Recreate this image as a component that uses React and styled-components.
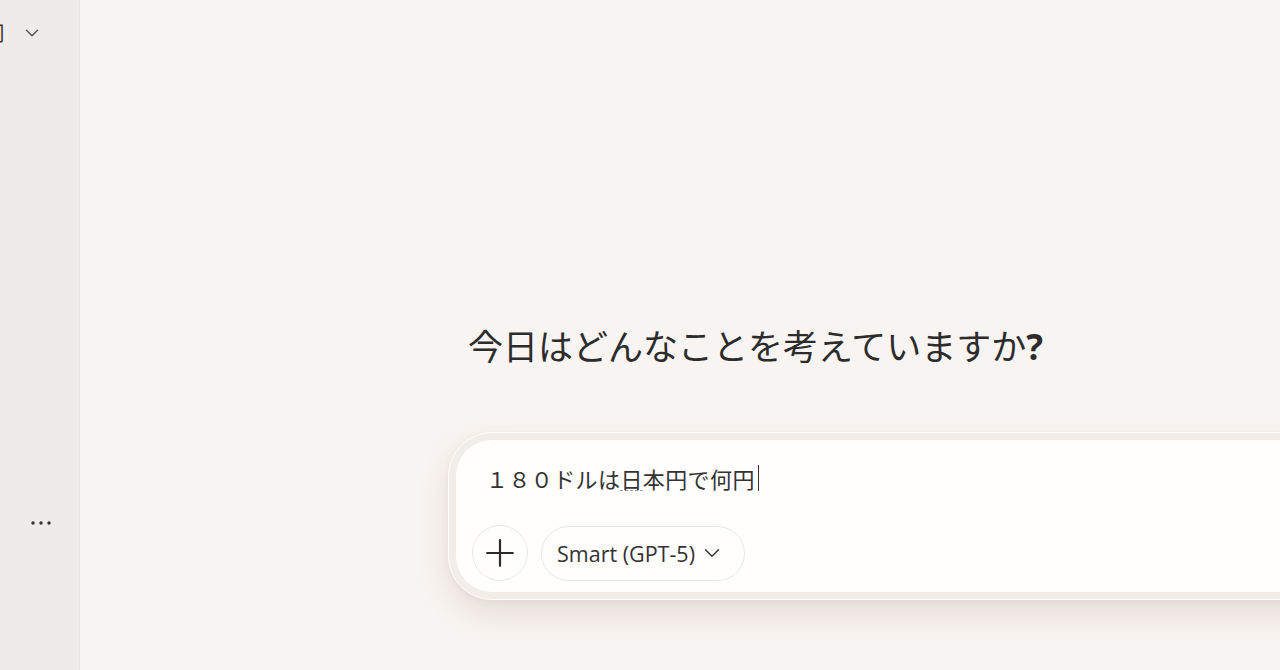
import React from "react";
import styled, { createGlobalStyle } from "styled-components";
import { ChevronDown, Plus } from "lucide-react";

const GlobalStyle = createGlobalStyle`
  html, body {
    margin: 0;
    padding: 0;
    background: #f8f4f1;
  }

  body {
    font-family: "Noto Sans", "Noto Sans CJK JP", sans-serif;
    color: #2a2a2a;
  }
`;

const Shell = styled.div`
  display: flex;
  width: 1280px;
  height: 670px;
  overflow: hidden;
`;

const Sidebar = styled.aside`
  flex: 0 0 79px;
  display: flex;
  flex-direction: column;
  background: #efebe8;
  border-right: 1px solid #e8e3df;
  overflow: hidden;
`;

const SidebarHeader = styled.div`
  display: flex;
  align-items: center;
  gap: 16px;
  height: 28px;
  margin: 19px 0 0 -15px;
`;

const ClippedTitle = styled.span`
  font-family: "Noto Sans CJK JP", sans-serif;
  font-size: 20px;
  line-height: 28px;
  color: #333;
`;

const MoreRow = styled.div`
  display: flex;
  justify-content: flex-end;
  padding-right: 28px;
  margin-top: 474px;
  color: #333;
`;

const Main = styled.main`
  flex: 1;
  min-width: 0;
  display: flex;
  flex-direction: column;
  padding: 320px 0 0 368px;
  overflow: hidden;
  background: #f8f4f1;
`;

const Heading = styled.h1`
  margin: 0 0 0 20px;
  font-family: "Noto Sans CJK JP", sans-serif;
  font-weight: 400;
  font-size: 35px;
  line-height: 50px;
  color: #2c2c2c;
  white-space: nowrap;
`;

const Question = styled.span`
  font-family: "Noto Sans", sans-serif;
  font-weight: 700;
`;

const Composer = styled.div`
  flex: 0 0 auto;
  width: 920px;
  margin-top: 60px;
  padding: 7px;
  border: 1.5px solid #ffffff;
  border-radius: 44px;
  background: #f2ede9;
  box-shadow: 0 14px 30px rgba(140, 110, 90, 0.16),
    0 2px 6px rgba(140, 110, 90, 0.08);
`;

const ComposerInner = styled.div`
  display: flex;
  flex-direction: column;
  gap: 33px;
  height: 152px;
  box-sizing: border-box;
  padding: 24px 16px 0;
  border-radius: 36px;
  background: #fffefd;
`;

const InputLine = styled.div`
  display: flex;
  align-items: center;
  padding-left: 14px;
  font-family: "Noto Sans CJK JP", sans-serif;
  font-size: 22px;
  line-height: 28px;
  letter-spacing: 0.4px;
  color: #333;
`;

const Composing = styled.span`
  border-bottom: 1px dashed #a0a0a0;
  line-height: 24px;
`;

const Caret = styled.span`
  display: inline-block;
  width: 1px;
  height: 26px;
  margin-left: 3px;
  background: #333;
`;

const Controls = styled.div`
  display: flex;
  align-items: center;
  gap: 13px;
`;

const CircleButton = styled.button`
  display: flex;
  align-items: center;
  justify-content: center;
  width: 56px;
  height: 56px;
  padding: 0;
  border: 1px solid #ebe7e3;
  border-radius: 50%;
  background: #fffefd;
  color: #2c2c2c;
`;

const ModelPill = styled.button`
  display: flex;
  align-items: center;
  gap: 4px;
  height: 55px;
  padding: 0 19px 0 15px;
  border: 1px solid #ebe7e3;
  border-radius: 28px;
  background: #fffefd;
  font-family: "Open Sans", "Noto Sans", sans-serif;
  font-size: 21.5px;
  color: #333;
`;

const Dots = () => (
  <svg width="20" height="4" viewBox="0 0 20 4">
    <circle cx="2" cy="2" r="1.7" fill="currentColor" />
    <circle cx="10" cy="2" r="1.7" fill="currentColor" />
    <circle cx="18" cy="2" r="1.7" fill="currentColor" />
  </svg>
);

const App = () => (
  <>
    <GlobalStyle />
    <Shell>
      <Sidebar>
        <SidebarHeader>
          <ClippedTitle>司</ClippedTitle>
          <ChevronDown size={22} strokeWidth={1.6} color="#555" />
        </SidebarHeader>
        <MoreRow>
          <Dots />
        </MoreRow>
      </Sidebar>

      <Main>
        <Heading>
          今日はどんなことを考えていますか<Question>?</Question>
        </Heading>

        <Composer>
          <ComposerInner>
            <InputLine>
              １８０ドルは<Composing>日</Composing>本円で何円
              <Caret />
            </InputLine>
            <Controls>
              <CircleButton aria-label="追加">
                <Plus size={44} strokeWidth={1.2} />
              </CircleButton>
              <ModelPill>
                Smart (GPT-5)
                <ChevronDown size={26} strokeWidth={1.3} />
              </ModelPill>
            </Controls>
          </ComposerInner>
        </Composer>
      </Main>
    </Shell>
  </>
);

export default App;
